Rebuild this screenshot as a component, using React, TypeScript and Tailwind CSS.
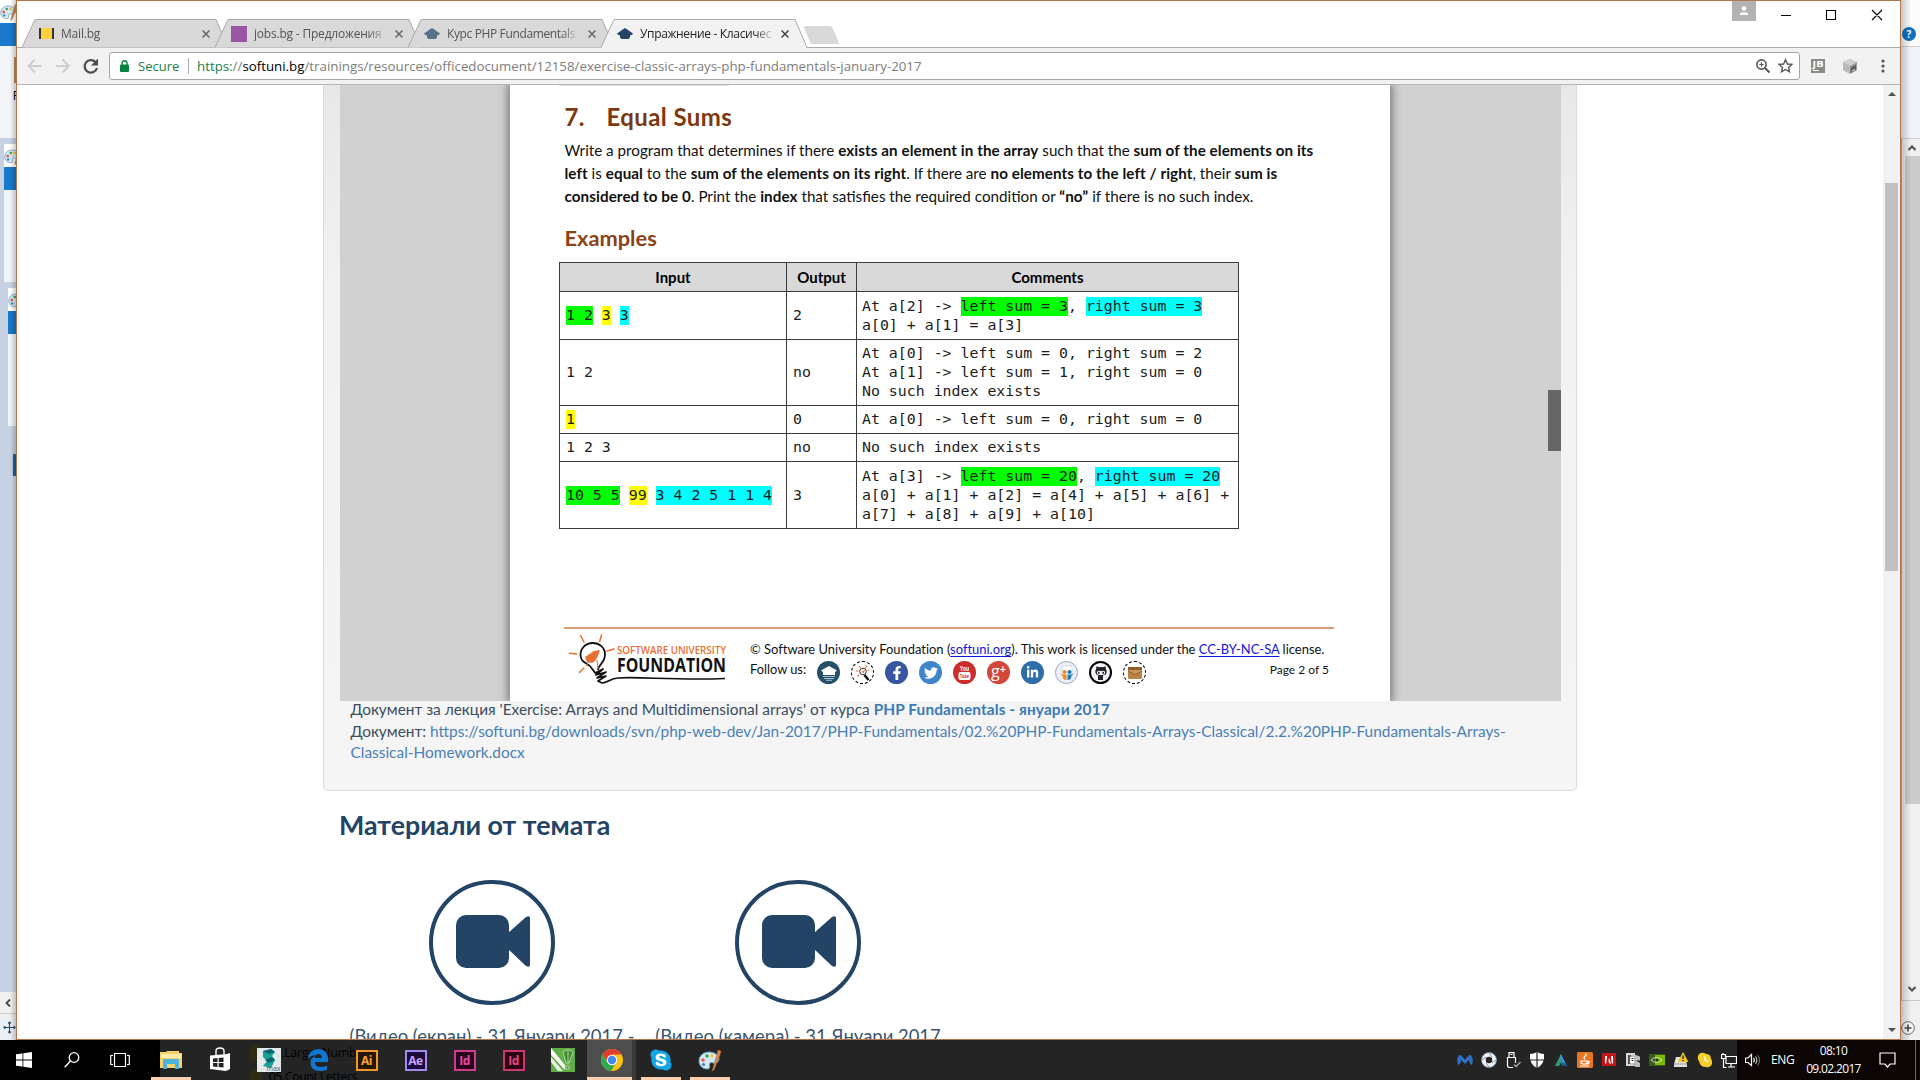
import React from 'react';
import { FaFacebookF, FaTwitter, FaLinkedinIn, FaGithubAlt, FaSkype } from 'react-icons/fa';

/* ---------- small drawings ---------- */

function Palette({ className }: { className: string }) {
  return (
    <svg viewBox="0 0 24 24" className={className}>
      <path d="M11 4C5 4 1 8 1 13s4 8 8 8c3 0 3-2 2.500-3.500C11 15 13 14 15 15c3 1 6-1 6-4 0-4-5-7-10-7z" fill="#d5e8f3" stroke="#5f9cc0" strokeWidth="1" />
      <circle cx="5" cy="12" r="1.800" fill="#e2574c" />
      <circle cx="9" cy="8" r="1.800" fill="#3fa44e" />
      <circle cx="14" cy="8" r="1.800" fill="#f3c33c" />
      <circle cx="5.500" cy="16.500" r="1.600" fill="#3b82c4" />
      <path d="M20 2l3 1-1 4-6 15-2 1 1-3 4-14z" fill="#d98a4a" stroke="#a35e2b" strokeWidth=".5" />
    </svg>
  );
}

function Cap({ className }: { className: string }) {
  return (
    <svg viewBox="0 0 16 11" className={className} fill="currentColor">
      <path d="M8 0l3 2 5 3.500-1 1.200-2 .8V9.500L11.500 11h-7L3 9.500v-2l-2-.8L0 5.500 5 2z" />
    </svg>
  );
}

function Camera() {
  return (
    <div className="flex h-[125px] w-[126px] items-center justify-center rounded-full border-4 border-[#234465]">
      <svg viewBox="0 0 76 54" className="-mt-[2px] ml-[1px] h-[54px] w-[76px]" fill="#234465">
        <rect x="1" y="0" width="53" height="53" rx="10" />
        <path d="M53 18 L71 2 Q75 0 75 3 V50 Q75 53 71 51 L53 34z" />
      </svg>
    </div>
  );
}

function FoundationLogo() {
  return (
    <svg viewBox="0 0 164 57" className="h-[57px] w-[164px]" fill="none">
      <g stroke="#e8702f" strokeWidth="1.500" strokeLinecap="round">
        <path d="M16.500 6.500l3.500 6.500M37.500 6l-1.800 6.500M5.500 24.300l7 .8M43 22l7-2M15.500 43.500l4.300-4.500" />
      </g>
      <path d="M34 41C34 36 41 34 41 25.500 41 18.500 35.500 14 28.700 14S16.500 19 16.500 26c0 8.500 8.500 8 11 13l4.500 6" stroke="#111" strokeWidth="1.800" />
      <path d="M21 28l9-6 6-1-2 6-3 5-3 2-5-1z" fill="#e8702f" />
      <path d="M24 33l-1.500 4M33 31l1 9" stroke="#e8702f" strokeWidth="1" />
      <path d="M31 44l8-4-7 6 10-3-9 6 9-2-8 5 4 2c6 0 8-4.500 16-5 20-1.500 60 2.500 107 .5" stroke="#111" strokeWidth="1.700" strokeLinejoin="round" />
      <text x="53" y="24.500" fill="#e8702f" className="font-['Open_Sans'] text-[11.500px] font-semibold" textLength="109" lengthAdjust="spacingAndGlyphs">SOFTWARE UNIVERSITY</text>
      <text x="53" y="43" fill="#111" className="font-['Open_Sans'] text-[20px] font-bold" textLength="109" lengthAdjust="spacingAndGlyphs">FOUNDATION</text>
    </svg>
  );
}

/* ---------- browser chrome ---------- */

function Tab({ children, title, width, active }: { children: React.ReactNode; title: string; width: string; active?: boolean }) {
  const fill = active ? '#f2f2f2' : '#d9d9d9';
  return (
    <div className={`relative -mr-[13px] h-[29px] w-[206px] shrink-0 ${active ? 'z-10' : ''}`}>
      <svg viewBox="0 0 206 29" className="absolute inset-0 h-[29px] w-[206px]">
        <path d="M0 28.500L13 .5H194L206 28.500z" fill={fill} />
        <path d="M0 28.500L13 .5H194L206 28.500" fill="none" stroke="#a9a9a9" strokeWidth="1" />
        {active && <path d="M1 28.500H205" stroke="#f2f2f2" strokeWidth="1.200" />}
      </svg>
      <div className="relative flex h-[29px] items-center pl-4">
        <div className="flex w-[16px] shrink-0 justify-center">{children}</div>
        <div className={`ml-[7px] w-[132px] overflow-hidden whitespace-nowrap [mask-image:linear-gradient(to_right,black_86%,transparent_102%)] text-[12px] leading-[18px] ${active ? 'text-[#222]' : 'text-[#555]'}`}>
          <span className={width}>{title}</span>
        </div>
        <svg viewBox="0 0 8 8" className="ml-[9px] h-[8px] w-[8px]" stroke={active ? '#444' : '#666'} strokeWidth="1.500">
          <path d="M.5.5l7 7M7.500.5l-7 7" />
        </svg>
      </div>
    </div>
  );
}

function TabStrip() {
  return (
    <div className="relative flex h-[47px] items-end bg-white">
      <div className="absolute inset-x-0 bottom-0 h-px bg-[#a9a9a9]" />
      <div className="flex pl-[5px]">
        <Tab title="Mail.bg" width="tracking-[-0.2px]">
          <div className="h-[11px] w-[15px] border-x-2 border-[#333] bg-[#ffcf3f]" />
        </Tab>
        <Tab title="jobs.bg - Предложения" width="tracking-[-0.2px]">
          <div className="h-[16px] w-[16px] shrink-0 bg-[#9856a5]" />
        </Tab>
        <Tab title="Курс PHP Fundamentals" width="tracking-[-0.37px]">
          <Cap className="h-[11px] w-[16px] text-[#58718b]" />
        </Tab>
        <Tab title="Упражнение - Класичес" width="tracking-[-0.33px]" active>
          <Cap className="h-[11px] w-[16px] text-[#234465]" />
        </Tab>
      </div>
      <svg viewBox="0 0 36 18" className="mb-[4px] ml-[10px] h-[18px] w-[36px]">
        <path d="M1 .5h25q1.500 0 2 1.500l6.500 15q0 .5-1 .5h-25q-1.500 0-2-1.500l-6-14.500q-.3-1 .5-1z" fill="#d9d9d9" stroke="#cbcbcb" strokeWidth=".6" />
      </svg>
      <div className="absolute top-0 right-0 flex items-start">
        <div className="mr-[24px] flex h-[20px] w-[24px] justify-center bg-[#b3b3b3] pt-[5px]">
          <svg viewBox="0 0 10 10" className="h-[10px] w-[10px]" fill="#fff"><circle cx="5" cy="2.500" r="2.300" /><path d="M1 9V7.500q4-3 8 0V9z" /></svg>
        </div>
        <svg viewBox="0 0 103 12" className="mt-[8px] mr-[17px] h-[12px] w-[103px]" fill="none" stroke="#000" strokeWidth="1.100">
          <path d="M1 6.500h10M46.500 1.500h9v9h-9zM92 1l10 10M102 1l-10 10" />
        </svg>
      </div>
    </div>
  );
}

function Toolbar() {
  return (
    <div className="flex h-[37px] items-center border-b border-[#b4b4b4] bg-[#f2f2f2]">
      <svg viewBox="0 0 84 20" className="ml-[8px] h-[20px] w-[84px]" fill="none">
        <g stroke="#cfcfcf" strokeWidth="2"><path d="M3.500 10h13M10 3.500L3.500 10l6.500 6.500M31 10h13M37.500 3.500L44 10l-6.500 6.500" /></g>
        <path d="M70.500 6A6.300 6.300 0 1 0 72 12" stroke="#4d4d4d" strokeWidth="2.200" />
        <path d="M73 2.500v7h-7z" fill="#4d4d4d" />
      </svg>
      <div className="flex h-[28px] w-[1691px] items-center rounded-[3px] border border-[#a6a6a6] bg-white whitespace-nowrap">
        <svg viewBox="0 0 9 12" className="ml-[10px] h-[12px] w-[9px]"><path d="M2 5V3.300a2.500 2.500 0 0 1 5 0V5" fill="none" stroke="#0b8043" strokeWidth="1.400" /><rect y="4.500" width="9" height="7.500" rx="1" fill="#0b8043" /></svg>
        <span className="ml-[9px] w-[41px] pt-px text-[13px] text-[#1c8048]">Secure</span>
        <span className="mx-[9px] h-[16px] w-px bg-[#aaa]" />
        <span className="-ml-[1px] pt-px text-[13.300px] text-[#7d7d7d]"><span className="text-[#1c8048]">https:</span>//<span className="text-black">softuni.bg</span>/trainings/resources/officedocument/12158/exercise-classic-arrays-php-fundamentals-january-2017</span>
        <svg viewBox="0 0 38 16" className="mr-[6px] ml-auto h-[16px] w-[38px]" fill="none" stroke="#555" strokeWidth="1.600">
          <circle cx="6.500" cy="6.500" r="4.600" /><path d="M10 10l4.500 4.500" strokeWidth="2" /><path d="M4.300 6.500h4.400M6.500 4.300v4.400" strokeWidth="1.200" />
          <path d="M30.500 1.800l1.900 4.200 4.500.4-3.400 3 1 4.500-4-2.400-4 2.400 1-4.500-3.400-3 4.500-.4z" strokeWidth="1.400" />
        </svg>
      </div>
      <div className="relative ml-[11px] h-[14px] w-[14px] bg-[#8b8b8b]">
        <svg viewBox="0 0 14 14" className="h-[14px] w-[14px]">
          <text x="1.500" y="8" fill="#fff" className="font-['Open_Sans'] text-[8.500px] font-bold" textLength="11" lengthAdjust="spacingAndGlyphs">JB</text>
          <path d="M2 11.500h6" stroke="#fff" />
        </svg>
      </div>
      <svg viewBox="0 0 14 15" className="ml-[18px] h-[15px] w-[14px]"><path d="M7 0l7 3v8l-7 4-7-4V3z" fill="#b9b9b9" /><path d="M7 0l7 3-7 4-7-4z" fill="#cfcfcf" /><path d="M7 7l7-4v8l-7 4z" fill="#a0a0a0" /><path d="M7.500 8.500l5.500-3v5.500l-5.500 3z" fill="#606060" /><path d="M9 12l3-1.500" stroke="#eee" /></svg>
      <svg viewBox="0 0 4 14" className="ml-[24px] h-[14px] w-[4px]" fill="#555"><circle cx="2" cy="2" r="1.600" /><circle cx="2" cy="7" r="1.600" /><circle cx="2" cy="12" r="1.600" /></svg>
    </div>
  );
}

/* ---------- document ---------- */

const G = ({ children }: { children: React.ReactNode }) => <span className="inline-block h-[19px] bg-[#00ff00] align-top">{children}</span>;
const Y = ({ children }: { children: React.ReactNode }) => <span className="inline-block h-[19px] bg-[#ffff00] align-top">{children}</span>;
const C = ({ children }: { children: React.ReactNode }) => <span className="inline-block h-[19px] bg-[#00ffff] align-top">{children}</span>;

function Row({ height, cells }: { height: string; cells: React.ReactNode[] }) {
  return (
    <div className={`flex border-t border-[#3c3c3c] font-['DejaVu_Sans_Mono',monospace] text-[14.880px] leading-[19px] whitespace-pre text-[#1c1c1c] ${height}`}>
      <div className="flex w-[227px] items-center border-r border-[#3c3c3c] pl-[6px]"><div>{cells[0]}</div></div>
      <div className="flex w-[70px] items-center border-r border-[#3c3c3c] pl-[6px]">{cells[1]}</div>
      <div className="flex items-center pl-[5px]"><div>{cells[2]}</div></div>
    </div>
  );
}

function ExampleTable() {
  return (
    <div className="mt-[10px] -ml-[5px] w-[680px] border-x border-b border-[#3c3c3c]">
      <div className="flex h-[29px] border-t border-[#3c3c3c] bg-[#d9d9d9] text-center text-[15px] leading-[29px] font-bold text-black">
        <div className="w-[227px] border-r border-[#3c3c3c]">Input</div>
        <div className="w-[70px] border-r border-[#3c3c3c]">Output</div>
        <div className="flex-1">Comments</div>
      </div>
      <Row height="h-[48px]" cells={[<><G>1 2</G> <Y>3</Y> <C>3</C></>, '2', <>At a[2] -&gt; <G>left sum = 3</G>, <C>right sum = 3</C><br />a[0] + a[1] = a[3]</>]} />
      <Row height="h-[66px]" cells={['1 2', 'no', <>At a[0] -&gt; left sum = 0, right sum = 2<br />At a[1] -&gt; left sum = 1, right sum = 0<br />No such index exists</>]} />
      <Row height="h-[28px]" cells={[<Y>1</Y>, '0', <>At a[0] -&gt; left sum = 0, right sum = 0</>]} />
      <Row height="h-[28px]" cells={['1 2 3', 'no', 'No such index exists']} />
      <Row height="h-[67px]" cells={[<><G>10 5 5</G> <Y>99</Y> <C>3 4 2 5 1 1 4</C></>, '3', <>At a[3] -&gt; <G>left sum = 20</G>, <C>right sum = 20</C><br />a[0] + a[1] + a[2] = a[4] + a[5] + a[6] +<br />a[7] + a[8] + a[9] + a[10]</>]} />
    </div>
  );
}

function SocialIcons() {
  const disc = 'flex h-[23px] w-[23px] items-center justify-center rounded-full';
  return (
    <div className="ml-[10px] flex gap-[11px]">
      <div className={`${disc} bg-[#254f66]`}>
        <svg viewBox="0 0 18 18" className="h-[18px] w-[18px]"><path d="M9 2l8 4.500-2 1.500v3H3V8L1 6.500z" fill="#fff" /><path d="M3 12.500h12M4 14.500h10M6 16.300h6" stroke="#a9c3d0" strokeWidth="1" /></svg>
      </div>
      <div className={`${disc} border border-dashed border-black bg-white`}>
        <svg viewBox="0 0 18 18" className="h-[18px] w-[18px]" fill="none"><circle cx="9" cy="7.500" r="3.300" stroke="#333" strokeWidth="1" /><path d="M7 8l4-2-1 3z" fill="#e8702f" /><path d="M10.500 11l4 5" stroke="#111" strokeWidth="2.500" /><path d="M5 2l1.500 2M12.500 1.500L11.500 4M2 7h2.500M15.500 6l-2 .5M3.500 12.500L5 11" stroke="#e8702f" strokeWidth="1.200" /></svg>
      </div>
      <div className={`${disc} bg-[#3a559f] text-white`}><FaFacebookF size={14} /></div>
      <div className={`${disc} bg-[#3f86cd] text-white`}><FaTwitter size={14} /></div>
      <div className={`${disc} bg-[#cb2d2a]`}>
        <svg viewBox="0 0 23 23" className="h-[23px] w-[23px]">
          <text x="7" y="10" fill="#fff" className="font-['Open_Sans'] text-[7.500px] font-bold" textLength="9" lengthAdjust="spacingAndGlyphs">You</text>
          <rect x="5.500" y="11" width="12" height="8" rx="2" fill="#fff" />
          <text x="7" y="17.300" fill="#cb2d2a" className="font-['Open_Sans'] text-[6px] font-bold" textLength="9" lengthAdjust="spacingAndGlyphs">Tube</text>
        </svg>
      </div>
      <div className={`${disc} bg-[#d44638] text-white`}>
        <span className="-mt-[4px] font-['Open_Sans'] text-[16px] leading-[18px]">g</span><span className="-mt-[7px] text-[11px] leading-[12px] font-bold">+</span>
      </div>
      <div className={`${disc} bg-[#2e6da9] text-white`}><FaLinkedinIn size={13} /></div>
      <div className={`${disc} border border-[#9aa4c0] bg-[#eef0f8]`}>
        <svg viewBox="0 0 16 16" className="h-[16px] w-[16px]"><path d="M3 1h10v6H3z" fill="#fff" stroke="#c5cbdc" strokeWidth=".6" /><circle cx="5.500" cy="7" r="2" fill="#f08a24" /><circle cx="10.500" cy="7" r="2" fill="#1f7fb8" /><path d="M1 8l3 1.500h3.500V15q-4 0-4-4z" fill="#f08a24" /><path d="M15 8l-3 1.500H8.500V15q4 0 4-4z" fill="#1f7fb8" /></svg>
      </div>
      <div className={`${disc} flex-col border-2 border-black bg-[#f2f2fb] text-[#222]`}>
        <FaGithubAlt size={12} /><span className="-mt-[2px] h-[5px] w-[5px] bg-[#222]" />
      </div>
      <div className={`${disc} border border-dashed border-black bg-white`}>
        <svg viewBox="0 0 16 14" className="h-[14px] w-[16px]"><rect x="1" y="1" width="14" height="12" rx="1" fill="#b98546" /><path d="M1 5l7 4 7-4V3H1z" fill="#c99552" /><path d="M1 5l7 4 7-4" fill="none" stroke="#7d5226" strokeWidth=".8" /><path d="M1 1h14v3H1z" fill="#8e5c2b" /></svg>
      </div>
    </div>
  );
}

function DocumentPage() {
  return (
    <div className="relative ml-[170px] h-[616px] w-[880px] bg-white pt-[17px] pr-[56px] pl-[54px] text-[#111] shadow-[0_0_9px_2px_rgba(0,0,0,0.45)]">
      <div className="absolute top-0 left-[49px] h-px w-[170px] bg-[#e3e3e3]" />
      <h2 className="flex h-[30px] pl-[0.500px] text-[24px] leading-[30px] font-bold tracking-[0.4px] text-[#7c380f]"><span className="w-[42px]">7.</span>Equal Sums</h2>
      <p className="mt-[7px] pl-[0.500px] text-[15.210px] leading-[23px] whitespace-nowrap [&>b]:tracking-[0.08px]">
        Write a program that determines if there <b>exists an element in the array</b> such that the <b>sum of the elements on its</b><br />
        <b>left</b> is <b>equal</b> to the <b>sum of the elements on its right</b>. If there are <b>no elements to the left / right</b>, their <b>sum is</b><br />
        <b>considered to be 0</b>. Print the <b>index</b> that satisfies the required condition or <b>“no”</b> if there is no such index.
      </p>
      <h3 className="mt-[16px] h-[28px] pl-[0.500px] text-[21.800px] leading-[28px] font-bold text-[#8a4317]">Examples</h3>
      <ExampleTable />
      <div className="mt-[98px] h-[2px] w-[770px] bg-[#dd9c78]" />
      <div className="flex">
        <FoundationLogo />
        <div className="ml-[22px] flex-1 pt-[10px] whitespace-nowrap [font-variant-ligatures:none]">
          <div className="text-[12.950px] leading-[20px]">© Software University Foundation (<span className="text-[#1414e0] underline underline-offset-2">softuni.org</span>). This work is licensed under the <span className="text-[#1414e0] underline underline-offset-2">CC-BY-NC-SA</span> license.</div>
          <div className="mt-[2px] flex items-center">
            <span className="-mt-[5px] w-[57px] text-[12.800px]">Follow us:</span>
            <SocialIcons />
            <span className="-mt-[5px] mr-[5px] ml-auto text-[12px]">Page 2 of 5</span>
          </div>
        </div>
      </div>
    </div>
  );
}

function WebPage() {
  return (
    <div className="h-[954px] flex-1 overflow-hidden bg-white font-['Lato',sans-serif]">
      <div className="ml-[306px] h-[706px] w-[1254px] rounded-b-[5px] border-x border-b border-[#dcdcdc] bg-linear-to-b from-[#e8e8e8] via-[#f2f2f2] via-30% to-[#f5f5f5] pl-[16px]">
        <div className="relative h-[616px] w-[1221px] overflow-hidden bg-[#d1d1d1]">
          <DocumentPage />
          <div className="absolute top-[305px] right-0 h-[61px] w-[13px] bg-[#666]" />
        </div>
        <div className="relative -mt-[2px] pl-[10.500px] text-[15.420px] leading-[21.700px] whitespace-nowrap text-[#3b4d60]">
          Документ за лекция 'Exercise: Arrays and Multidimensional arrays' от курса <b className="tracking-[0.1px] text-[#3a7ab5]">PHP Fundamentals - януари 2017</b><br />
          Документ: <span className="text-[#4a80b5]">https://softuni.bg/downloads/svn/php-web-dev/Jan-2017/PHP-Fundamentals/02.%20PHP-Fundamentals-Arrays-Classical/2.2.%20PHP-Fundamentals-Arrays-<br />Classical-Homework.docx</span>
        </div>
      </div>
      <h2 className="mt-[18px] ml-[322px] text-[26.800px] leading-[32px] font-bold text-[#234465]">Материали от темата</h2>
      <div className="mt-[39px] ml-[322px] flex text-[18.440px] leading-[24px] whitespace-nowrap text-[#3b5570]">
        <div className="flex w-[306px] flex-col items-center gap-[19px]"><Camera />(Видео (екран) - 31 Януари 2017 -</div>
        <div className="flex w-[306px] flex-col items-center gap-[19px]"><Camera />(Видео (камера) - 31 Януари 2017</div>
      </div>
    </div>
  );
}

function PageScrollbar() {
  return (
    <div className="flex h-[954px] w-[17px] flex-col items-center bg-[#f1f1f1]">
      <svg viewBox="0 0 8 4" className="mt-[7px] h-[4px] w-[8px]" fill="#505050"><path d="M0 4l4-4 4 4z" /></svg>
      <div className="mt-[87px] h-[388px] w-[13px] bg-[#c1c1c1]" />
      <svg viewBox="0 0 8 4" className="mt-auto mb-[7px] h-[4px] w-[8px]" fill="#505050"><path d="M0 0l4 4 4-4z" /></svg>
    </div>
  );
}

/* ---------- windows behind the browser ---------- */

function LeftStrip() {
  return (
    <div className="relative flex h-[1040px] w-[16px] flex-col overflow-hidden bg-[#c6d2e3] *:shrink-0">
      <div className="h-[23px] bg-white"><Palette className="mt-[3px] h-[18px] w-[18px]" /></div>
      <div className="h-[23px] bg-[#1979ca]" />
      <div className="flex h-[92px] flex-col items-end overflow-hidden bg-[#f3f5f8]">
        <div className="mt-[11px] h-[26px] w-[2px] bg-[#b98a5c]" />
        <div className="mt-[4px] -mr-[4px] font-['Open_Sans'] text-[12px] leading-[18px]">P</div>
      </div>
      <div className="mt-[6px] ml-[4px] h-[23px] bg-white"><Palette className="mt-[3px] h-[18px] w-[18px]" /></div>
      <div className="ml-[4px] h-[23px] bg-[#1979ca]" />
      <div className="ml-[4px] h-[92px] bg-[#f0f3f8]" />
      <div className="mt-[6px] ml-[8px] h-[23px] bg-white"><Palette className="mt-[3px] h-[18px] w-[18px]" /></div>
      <div className="ml-[8px] h-[23px] bg-[#1979ca]" />
      <div className="ml-[8px] h-[92px] bg-[#f0f3f8]" />
      <div className="ml-[12px] h-[28px]" />
      <div className="ml-[13px] h-[22px] bg-[#1f5f9c]" />
      <div className="ml-[10px] h-[516px] bg-[#cfd9e7]" />
      <div className="flex h-[22px] items-center justify-center border-b border-[#c9c9c9] bg-[#f0f0f0]">
        <svg viewBox="0 0 6 8" className="h-[8px] w-[6px]" fill="none" stroke="#444" strokeWidth="1.800"><path d="M5 .5L1.500 4 5 7.500" /></svg>
      </div>
      <div className="flex h-[26px] items-center bg-[#eceff3]">
        <svg viewBox="0 0 14 14" className="ml-[3px] h-[13px] w-[13px] shrink-0" fill="none" stroke="#274a6d" strokeWidth="1.200"><path d="M7 1v12M1 7h12M5.500 2.500L7 1l1.500 1.500M5.500 11.500L7 13l1.500-1.500M2.500 5.500L1 7l1.500 1.500M11.500 5.500L13 7l-1.500 1.500" /></svg>
      </div>
      <div className="absolute inset-y-0 right-0 w-[6px] bg-linear-to-l from-black/20 to-transparent" />
    </div>
  );
}

function RightStrip() {
  return (
    <div className="relative flex h-[1040px] w-[19px] flex-col overflow-hidden bg-[#f0f3f7]">
      <div className="flex h-[47px] items-end border-b border-[#cdd0d4] bg-[#fbfbfb] pb-[5px] pl-px">
        <div className="flex h-[14px] w-[14px] items-center justify-center rounded-full bg-[#0f6fc0] font-['Open_Sans'] text-[10px] leading-[14px] font-bold text-white">?</div>
      </div>
      <div className="h-[92px] border-b border-[#cdd0d4]" />
      <div className="flex h-[861px] flex-col items-center border-l border-[#d8a98c] bg-[#f0f0f0] pl-[2px]">
        <svg viewBox="0 0 8 6" className="mt-[6px] h-[6px] w-[8px]" fill="none" stroke="#505050" strokeWidth="2"><path d="M.5 5L4 1.500 7.500 5" /></svg>
        <div className="mt-[5px] h-[648px] w-[15px] bg-[#cbcbcb]" />
        <svg viewBox="0 0 8 6" className="mt-auto mb-[8px] h-[6px] w-[8px]" fill="none" stroke="#505050" strokeWidth="2"><path d="M.5 1L4 4.500 7.500 1" /></svg>
      </div>
      <div className="flex flex-1 items-center border-t border-[#c9c9c9] bg-[#f0f0f0] pt-[14px]">
        <svg viewBox="0 0 14 14" className="h-[14px] w-[14px]" fill="#f8f8f8" stroke="#666"><circle cx="7" cy="7" r="6.300" /><path d="M3.500 7h7M7 3.500v7" stroke="#444" strokeWidth="1.600" /></svg>
      </div>
      <div className="absolute inset-y-0 left-0 w-[10px] bg-linear-to-r from-black/20 to-transparent" />
    </div>
  );
}

/* ---------- taskbar ---------- */

function AdobeTile({ label, tile }: { label: string; tile: string }) {
  return <div className={`flex h-[21px] w-[22px] items-center justify-center border-2 font-['Open_Sans'] text-[12px] leading-[17px] font-bold tracking-[-0.5px] ${tile}`}>{label}</div>;
}

function Slot({ children, open, active }: { children: React.ReactNode; open?: boolean; active?: boolean }) {
  return (
    <div className={`flex h-[40px] w-[49px] shrink-0 flex-col items-center ${active ? 'border-r-4 border-[#383838] bg-[#4d4d4d] pl-[4px]' : ''}`}>
      <div className="flex h-[37px] items-center pt-[3px]">{children}</div>
      {open && <div className={`h-[3px] bg-[#fbcfae] ${active ? '-ml-[4px] w-[45px]' : 'w-[40px]'}`} />}
    </div>
  );
}

function Tray() {
  const s = 'h-[16px] w-[16px]';
  return (
    <div className="flex *:mx-[4px]">
      <svg viewBox="0 0 16 16" className={s}><path d="M1 13Q-1 7 2 3q3 0 6 5 3-5 6-5 3 4 1 10-3-1-3-5l-4 4-4-4q0 4-3 5z" fill="#2d6fc0" /></svg>
      <svg viewBox="0 0 16 16" className={s}><circle cx="8" cy="8" r="5.300" fill="none" stroke="#f2f6fb" strokeWidth="4" /><circle cx="8" cy="8" r="7.500" fill="none" stroke="#86a9cf" strokeWidth=".8" /><path d="M8 1l3 4M15 8l-4 3M8 15l-3-4M1 8l4-3" stroke="#557" strokeWidth=".7" /></svg>
      <svg viewBox="0 0 16 16" className={s} fill="none" stroke="#fff"><path d="M4 5V.6h5V5M2.500 5.500h8V11M2.500 5v8.500q0 2 2 2h3.500" strokeWidth="1.200" /><path d="M5.500 2.500h2" /><path d="M9 12.500l2 2L15.500 10" stroke="#aaa" strokeWidth="1.400" /></svg>
      <svg viewBox="0 0 16 16" className={s}><path d="M8 0q3 2 7 2 1 10-7 14Q0 12 1 2q4 0 7-2z" fill="#fff" /><path d="M8 0v16M0 8h16" stroke="#222" strokeWidth="1.200" /></svg>
      <svg viewBox="0 0 16 16" className={s}><path d="M8 2L2 14h4l4-7z" fill="#2e9f6b" /><path d="M8 2l6 12h-4L7 6z" fill="#3b8fd0" /><path d="M6 11l6 0 2 3H10z" fill="#1c5b9b" /></svg>
      <svg viewBox="0 0 16 16" className={s}><rect width="16" height="16" rx="1.500" fill="#e87722" /><path d="M4 9h6v2q-3 2.500-6 0zM10 9.500q3-.5 2 1.200T9.500 12M3 14h9M8 7.500q-2-2 0-3.200t.5-3" fill="none" stroke="#fff" strokeWidth="1.200" /></svg>
      <svg viewBox="0 0 16 16" className={s}><rect x="1" y="1" width="14" height="13" fill="#c01818" /><path d="M4 11.500V4h2l-.8 7.500zM12 11.500V4h-2l.8 7.500zM8 5.500l2 6H8.500L7.500 9z" fill="#fff" /></svg>
      <svg viewBox="0 0 16 16" className={s}><path d="M1 1h9v13H1z" fill="#d9d9d9" /><path d="M3 3h5v9H3z" fill="#555" /><path d="M6 3h5l4 1.500v4h-4l4 2.500v4h-4l-6-3z" fill="#bcbcbc" /><path d="M5 5h4v6H5z" fill="#fff" /><path d="M6.500 6.500h2M6.500 8.500h2" stroke="#333" /></svg>
      <svg viewBox="0 0 16 16" className={s}><rect x="0" y="2" width="16" height="12" fill="#3d5c1c" /><path d="M6 3h10v10H6z" fill="#76b900" /><path d="M2 8q5-5 11 0-5 5-11 0z" fill="none" stroke="#e7f3d0" strokeWidth=".8" /><circle cx="8" cy="8" r="1.600" fill="#23380a" /></svg>
      <svg viewBox="0 0 16 16" className={s}><path d="M3 5h8l3 7v3H1v-3z" fill="#e2e2e2" /><path d="M1 12h13" stroke="#999" /><path d="M10 0l5.500 10h-11z" fill="#f7c325" /><path d="M10 3.500V7M10 8v1.200" stroke="#222" strokeWidth="1.300" /></svg>
      <svg viewBox="0 0 16 16" className={s}><path d="M4 1q3-1 5 1 5 0 5 5 2 2 1 5-2 4-6 3-6 0-7-6-2-2-1-5 1-3 3-3z" fill="#f7cf2c" /><path d="M8 4.500V8l3 2" fill="none" stroke="#fff" strokeWidth="1.500" /></svg>
      <svg viewBox="0 0 16 16" className={s} fill="none" stroke="#fff" strokeWidth="1.200"><path d="M5 4.500h10.500v7H5zM10 12v3M7 15h7M.5 2.500h4v4h-4zM2.500 6.500v9h3M2 1v1.500" /></svg>
      <svg viewBox="0 0 16 16" className={s} fill="none" stroke="#fff" strokeWidth="1.200"><path d="M.5 6v4.500H3l3.500 3V2.500L3 6zM8.500 6q1.500 2.200 0 4.400" /><path d="M10.500 4.500q2.700 3.700 0 7.400" stroke="#bbb" /><path d="M12.700 3q3.500 5.200 0 10.400" stroke="#666" /></svg>
    </div>
  );
}

function Taskbar() {
  return (
    <div className="relative flex h-[40px] items-center overflow-hidden bg-[#242424] font-['Open_Sans','Noto_Sans',sans-serif]">
      <div className="absolute inset-y-0 left-0 w-[160px] bg-[#020202]" />
      <div className="absolute inset-y-0 right-0 w-[183px] bg-[#0b0504]" />
      <div className="absolute top-[5px] left-[250px] h-[16px] w-[12px] bg-[#2e2a14]" />
      <div className="absolute top-[29px] left-[250px] h-[11px] w-[12px] bg-[#2e2a14]" />
      <div className="absolute top-[4px] left-[281px] text-[12px] leading-[18px] whitespace-pre text-black">.Large  Numb</div>
      <div className="absolute top-[28px] left-[269px] text-[12px] leading-[18px] tracking-[-0.3px] whitespace-nowrap text-black">05.Count Letters</div>

      <div className="relative flex h-[40px] items-center">
        <div className="flex w-[48px] justify-center"><svg viewBox="0 0 16 16" className="h-[16px] w-[16px]" fill="#fff"><path d="M0 2.300L6.500 1.400V7.600H0zM7.300 1.300L16 0v7.600H7.300zM0 8.400h6.500v6.200L0 13.700zM7.300 8.400H16V16l-8.700-1.300z" /></svg></div>
        <div className="flex w-[48px] justify-center"><svg viewBox="0 0 16 16" className="h-[16px] w-[16px]" fill="none" stroke="#fff" strokeWidth="1.300"><circle cx="10" cy="5.500" r="4.800" /><path d="M6.500 9L.7 15.300" /></svg></div>
        <div className="flex w-[50px] justify-center"><svg viewBox="0 0 20 16" className="mr-[3px] h-[16px] w-[20px]" fill="none" stroke="#fff" strokeWidth="1.200"><path d="M4.500 1.500h11v13h-11zM3 3.500H.7v9H3M17 3.500h2.300v9H17" /></svg></div>
      </div>

      <div className="relative flex">
        <Slot open>
          <svg viewBox="0 0 22 20" className="h-[20px] w-[22px]"><path d="M0 2h6l1-1h12v2h3v15H0z" fill="#f5d26b" /><path d="M1 4h20v4H1z" fill="#ffeaa5" /><path d="M3 10q0-1 1-1h14q1 0 1 1v9h-4v-5H7v5H3z" fill="#4cb3dd" /></svg>
        </Slot>
        <Slot>
          <svg viewBox="0 0 20 24" className="mb-[2px] h-[24px] w-[20px]"><path d="M0 8.500L17 7l3-1v16l-4 2-16-2z" fill="#fff" /><path d="M6 8V4q0-3 4-3t4 3v3" fill="none" stroke="#fff" strokeWidth="1.400" /><path d="M3 11.500l4.500-.5v4H3zM8.700 11l4.800-.5V15H8.700zM3 16h4.500v4L3 19.500zM8.700 16h4.800v4.500L8.700 20z" fill="#222" /></svg>
        </Slot>
        <Slot>
          <div className="relative h-[24px] w-[24px] bg-[#e4e9ea]">
            <svg viewBox="0 0 24 24" className="h-[24px] w-[24px]"><path d="M6 3l8-2 4 3-3 4 3 4-4 8-8-2 4-5-4-4z" fill="#17a096" /><path d="M6 3l8-2 4 3-6 2zM8 12l7-3 3 3-6 3z" fill="#0b6470" /></svg>
            <span className="absolute right-0 bottom-0 text-[7px] leading-[7px] text-[#555]">max</span>
          </div>
        </Slot>
        <Slot>
          <svg viewBox="0 0 20 22" className="h-[22px] w-[20px]"><path d="M0 10Q1 0 10.500 0 19.500 0 20 10v3H6.500q.5 5 6.500 5 3.500 0 6-1.500v4Q16 22 12 22 3 22 2.500 14 2.500 8.500 8 6 3.500 6 0 10zM6.500 9h7.500q-.2-4-3.700-4T6.500 9z" fill="#0f78d7" /></svg>
        </Slot>
        <Slot><AdobeTile label="Ai" tile="border-[#f0982c] bg-[#261600] text-[#f7a432]" /></Slot>
        <Slot><AdobeTile label="Ae" tile="border-[#a28af0] bg-[#1b0a3a] text-[#c3a6ff]" /></Slot>
        <Slot><AdobeTile label="Id" tile="border-[#cf3a90] bg-[#2a0419] text-[#ea4aa5]" /></Slot>
        <Slot><AdobeTile label="Id" tile="border-[#c8386f] bg-[#2a0413] text-[#e8467f]" /></Slot>
        <Slot>
          <svg viewBox="0 0 24 24" className="h-[24px] w-[24px]"><rect width="24" height="24" fill="#5fae46" /><path d="M0 0l14 17v5L0 7z" fill="#fff" /><path d="M0 9l12 14h-5L0 14z" fill="#e9f5e4" /><path d="M12 4q5-4 10 0l-4 11h-3z" fill="#3f8c2c" stroke="#cfe8c5" strokeWidth=".8" /><path d="M17 3v12M15 18h3v3h-3z" stroke="#cfe8c5" strokeWidth=".8" fill="#3f8c2c" /></svg>
        </Slot>
        <Slot open active>
          <svg viewBox="0 0 22 22" className="h-[22px] w-[22px]"><circle cx="11" cy="11" r="11" fill="#fbc116" /><path d="M1.500 5.500A11 11 0 0 1 20.500 5.500H11l-5.500 6z" fill="#e33b2e" /><path d="M1.500 5.500A11 11 0 0 0 10 22l5-8.500H6.300z" fill="#2da94f" /><circle cx="11" cy="11" r="5.200" fill="#fff" /><circle cx="11" cy="11" r="4.200" fill="#4688f1" /></svg>
        </Slot>
        <Slot open><div className="text-[#12a5e4] [background:radial-gradient(circle,white_45%,transparent_46%)]"><FaSkype size={24} /></div></Slot>
        <Slot open><Palette className="h-[24px] w-[24px]" /></Slot>
      </div>

      <div className="absolute inset-y-0 right-0 flex items-center text-[12px] text-white">
        <Tray />
        <span className="ml-[6px] w-[23px] tracking-[-0.4px]">ENG</span>
        <div className="ml-[8px] w-[63px] text-center leading-[18px] tracking-[-0.65px]">08:10<br />09.02.2017</div>
        <svg viewBox="0 0 17 16" className="mr-[19px] ml-[14px] h-[16px] w-[17px]" fill="none" stroke="#fff" strokeWidth="1.200"><path d="M1 1h15v11h-5l-2.500 3L6 12H1z" /></svg>
        <div className="mr-[4px] h-[40px] w-px bg-[#666]" />
      </div>
    </div>
  );
}

export default function App() {
  return (
    <div className="flex h-[1080px] w-[1920px] flex-col overflow-hidden bg-white">
      <div className="flex h-[1040px]">
        <LeftStrip />
        <div className="flex h-[1040px] w-[1885px] flex-col border border-[#b37547] bg-white font-['Open_Sans','Noto_Sans',sans-serif]">
          <TabStrip />
          <Toolbar />
          <div className="flex">
            <WebPage />
            <PageScrollbar />
          </div>
        </div>
        <RightStrip />
      </div>
      <Taskbar />
    </div>
  );
}
